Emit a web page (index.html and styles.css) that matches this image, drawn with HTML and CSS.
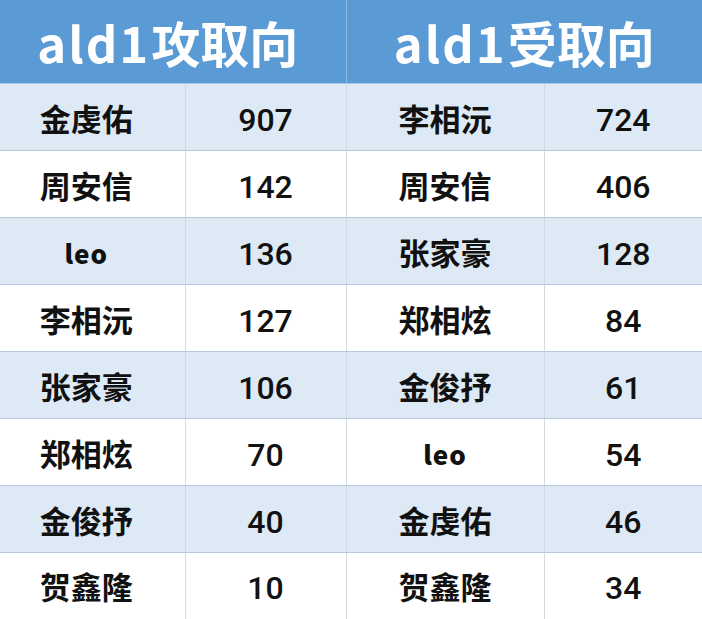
FILE: index.html
```html
<!DOCTYPE html>
<html lang="zh">
<head>
<meta charset="utf-8">
<link rel="stylesheet" href="styles.css">
</head>
<body>
<table class="rank">
  <colgroup>
    <col class="c1"><col class="c2"><col class="c3"><col class="c4">
  </colgroup>
  <thead>
    <tr>
      <th colspan="2" class="head head-left"><span class="lat">ald1</span>攻取向</th>
      <th colspan="2" class="head"><span class="lat">ald1</span>受取向</th>
    </tr>
  </thead>
  <tbody>
    <tr class="alt"><td class="name">金虔佑</td><td class="num">907</td><td class="name">李相沅</td><td class="num">724</td></tr>
    <tr><td class="name">周安信</td><td class="num">142</td><td class="name">周安信</td><td class="num">406</td></tr>
    <tr class="alt"><td class="name latin">leo</td><td class="num">136</td><td class="name">张家豪</td><td class="num">128</td></tr>
    <tr><td class="name">李相沅</td><td class="num">127</td><td class="name">郑相炫</td><td class="num">84</td></tr>
    <tr class="alt"><td class="name">张家豪</td><td class="num">106</td><td class="name">金俊抒</td><td class="num">61</td></tr>
    <tr><td class="name">郑相炫</td><td class="num">70</td><td class="name latin">leo</td><td class="num">54</td></tr>
    <tr class="alt"><td class="name">金俊抒</td><td class="num">40</td><td class="name">金虔佑</td><td class="num">46</td></tr>
    <tr class="last"><td class="name">贺鑫隆</td><td class="num">10</td><td class="name">贺鑫隆</td><td class="num">34</td></tr>
  </tbody>
</table>
</body>
</html>
```
FILE: styles.css
```css
html, body {
  margin: 0;
  padding: 0;
  background: #ffffff;
}
.rank {
  width: 702px;
  border-collapse: collapse;
  table-layout: fixed;
}
.c1 { width: 185px; }
.c2 { width: 161px; }
.c3 { width: 198px; }
.c4 { width: 158px; }

.head {
  height: 83px;
  padding: 0;
  background: #5b9bd5;
  color: #ffffff;
  font-family: "Noto Sans CJK SC", "Noto Sans", sans-serif;
  font-weight: 700;
  font-size: 49px;
  line-height: 1;
  text-align: center;
  border-bottom: 1px solid #a9c8e8;
  vertical-align: middle;
}
.head .lat {
  letter-spacing: 2px;
  margin-right: 1px;
}
.head-left {
  border-right: 1px solid #8fb9e2;
}
.rank th.head-left {
  padding-right: 10px;
}
.rank td {
  box-sizing: border-box;
  height: 67px;
  padding: 0;
  text-align: center;
  vertical-align: middle;
  color: #111111;
  border-bottom: 1px solid #b9c8d8;
  border-right: 1px solid #d2dbe4;
}
.rank td:last-child { border-right: none; }
.rank tr.last td { border-bottom: none; height: 66px; }
.alt td { background: #dde9f5; }

.name {
  font-family: "Noto Sans CJK SC", sans-serif;
  font-weight: 700;
  font-size: 31px;
  line-height: 1;
}
.rank td.name.latin {
  font-size: 26px;
  font-weight: 900;
  letter-spacing: 1px;
  padding-top: 3px;
}
.rank td.name:first-child {
  padding-right: 12px;
}
.rank td.num {
  font-family: Roboto, "Liberation Sans", Arial, sans-serif;
  font-size: 32px;
  font-weight: 500;
  line-height: 1;
  padding-top: 5px;
}
```
